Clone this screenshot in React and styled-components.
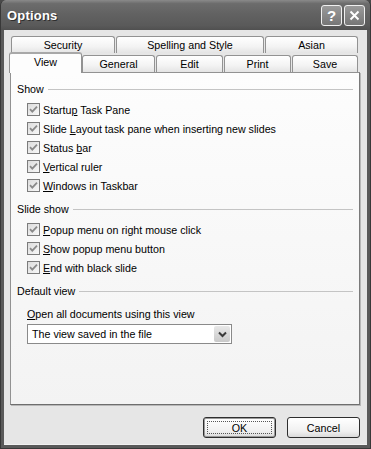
import React from 'react';
import styled, { createGlobalStyle } from 'styled-components';

const GlobalStyle = createGlobalStyle`
  html, body {
    margin: 0;
    padding: 0;
    background: #4a4a4a;
  }
  body {
    font-family: "Liberation Sans", Arial, sans-serif;
    font-size: 10.7px;
    color: #000;
  }
`;

const Window = styled.div`
  width: 371px;
  height: 449px;
  box-sizing: border-box;
  display: flex;
  flex-direction: column;
  background: #5a5a5a;
  border: 1px solid #383838;
  border-top: none;
  border-radius: 6px 6px 0 0;
  overflow: hidden;
`;

const TitleBar = styled.div`
  height: 30px;
  flex: none;
  display: flex;
  align-items: center;
  padding: 0 5px 0 6px;
  background: linear-gradient(#8a8a8a 0%, #6c6c6c 12%, #616161 50%, #5a5a5a 85%, #505050 100%);
`;

const Title = styled.div`
  flex: 1;
  color: #fff;
  font-weight: bold;
  font-size: 13px;
  letter-spacing: 0.2px;
  text-shadow: 1px 1px 0 #2e2e2e;
`;

const CaptionButton = styled.div`
  width: 19px;
  height: 19px;
  margin-left: 2px;
  display: flex;
  align-items: center;
  justify-content: center;
  border: 1px solid #f0f0f0;
  border-radius: 3px;
  background: linear-gradient(#9a9a9a, #767676);
  color: #fff;
  font-weight: bold;
  font-size: 15px;
`;

const Client = styled.div`
  flex: 1;
  margin: 0 3px 3px 3px;
  background: #e6e6e6;
  border-bottom: 1px solid #f2f2f2;
  display: flex;
  flex-direction: column;
  padding: 6px 7px 0 6px;
`;

const TabRow = styled.div`
  display: flex;
  gap: ${p => p.$gap}px;
  padding-left: ${p => p.$indent}px;
  height: ${p => p.$h}px;
`;

const Tab = styled.div`
  position: relative;
  box-sizing: border-box;
  width: ${p => p.$w}px;
  height: 17px;
  margin-top: ${p => p.$top}px;
  border: 1px solid #929292;
  border-bottom: none;
  border-radius: 3px 3px 0 0;
  background: linear-gradient(#ffffff, #f3f3f3 60%, #e4e4e4);
  display: flex;
  align-items: center;
  justify-content: center;
  line-height: 1;
  padding-top: 1px;
`;

const ActiveTab = styled(Tab)`
  height: 21px;
  z-index: 2;
  margin-left: -1px;
  margin-right: -1px;
  background: #fdfdfd;
  border-top: 2px solid #a8a8a8;
  align-items: flex-start;
  padding-top: 3px;
`;

const Panel = styled.div`
  width: 350px;
  height: 333px;
  box-sizing: border-box;
  border: 1px solid #929292;
  border-right-color: #7a7a7a;
  border-bottom-color: #6e6e6e;
  box-shadow: 1px 1px 0 #b8b8b8;
  background: linear-gradient(#fdfdfd, #f3f3f3);
  padding: 8px 6px 0 6px;
  display: flex;
  flex-direction: column;
`;

const GroupHeader = styled.div`
  display: flex;
  align-items: center;
  height: 16px;
  margin-top: ${p => p.$top || 0}px;
  margin-bottom: 3px;
  &::after {
    content: '';
    flex: 1;
    height: 1px;
    margin-left: 4px;
    background: #c4c4c4;
  }
`;

const Row = styled.div`
  display: flex;
  align-items: center;
  height: 19px;
  padding-left: 10px;
`;

const Box = styled.span`
  width: 13px;
  height: 13px;
  box-sizing: border-box;
  border: 1px solid #7c7c7c;
  background: linear-gradient(135deg, #dcdcdc, #f8f8f8);
  margin-right: 3px;
  display: flex;
  align-items: center;
  justify-content: center;
`;

const Label = styled.div`
  padding-left: 10px;
  height: 16px;
  display: flex;
  align-items: center;
  margin-top: 4px;
  margin-bottom: 2px;
`;

const Select = styled.div`
  margin-left: 10px;
  width: 205px;
  height: 20px;
  box-sizing: border-box;
  border: 1px solid #8a8a8a;
  background: #fff;
  display: flex;
  align-items: center;
  padding: 0 1px 0 4px;
`;

const SelectText = styled.span`
  flex: 1;
`;

const DropButton = styled.span`
  width: 16px;
  height: 16px;
  border-radius: 2px;
  background: linear-gradient(#e8e8e8, #c9c9c9);
  display: flex;
  align-items: center;
  justify-content: center;
`;

const ButtonBar = styled.div`
  display: flex;
  justify-content: flex-end;
  gap: 11px;
  padding-top: 12px;
`;

const Button = styled.div`
  width: 73px;
  height: 21px;
  box-sizing: border-box;
  border: 1px solid #2e2e2e;
  border-radius: 3px;
  background: linear-gradient(#ffffff, #f0f0f0 70%, #dadada);
  display: flex;
  align-items: center;
  justify-content: center;
  position: relative;
  box-shadow: ${p => (p.$default ? 'inset 0 0 0 1px #9a9a9a' : 'none')};
  &::after {
    content: '';
    display: ${p => (p.$default ? 'block' : 'none')};
    position: absolute;
    inset: 3px;
    border: 1px dotted #555;
  }
`;

const U = styled.span`
  text-decoration: underline;
`;

const Check = () => (
  <Box>
    <svg width="9" height="9" viewBox="0 0 9 9">
      <path d="M1 4.2 L3.3 6.6 L8 1.6" fill="none" stroke="#8a8a8a" strokeWidth="1.8" />
    </svg>
  </Box>
);

const CheckRow = ({ children }) => (
  <Row>
    <Check />
    <span>{children}</span>
  </Row>
);

export default function App() {
  return (
    <>
      <GlobalStyle />
      <Window>
        <TitleBar>
          <Title>Options</Title>
          <CaptionButton>?</CaptionButton>
          <CaptionButton>
            <svg width="11" height="11" viewBox="0 0 11 11">
              <path d="M1.5 1.5 L9.5 9.5 M9.5 1.5 L1.5 9.5" stroke="#fff" strokeWidth="2" />
            </svg>
          </CaptionButton>
        </TitleBar>
        <Client>
          <TabRow $gap={1} $indent={1} $h={17}>
            <Tab $w={104} $top={0}>Security</Tab>
            <Tab $w={148} $top={0}>Spelling and Style</Tab>
            <Tab $w={93} $top={0}>Asian</Tab>
          </TabRow>
          <TabRow $gap={1} $indent={0} $h={19}>
            <ActiveTab $w={73} $top={-1}>View</ActiveTab>
            <Tab $w={73} $top={2}>General</Tab>
            <Tab $w={67} $top={2}>Edit</Tab>
            <Tab $w={67} $top={2}>Print</Tab>
            <Tab $w={66} $top={2}>Save</Tab>
          </TabRow>
          <Panel>
            <GroupHeader>Show</GroupHeader>
            <CheckRow>Startu<U>p</U> Task Pane</CheckRow>
            <CheckRow>Slide <U>L</U>ayout task pane when inserting new slides</CheckRow>
            <CheckRow>Status <U>b</U>ar</CheckRow>
            <CheckRow><U>V</U>ertical ruler</CheckRow>
            <CheckRow><U>W</U>indows in Taskbar</CheckRow>
            <GroupHeader $top={6}>Slide show</GroupHeader>
            <CheckRow><U>P</U>opup menu on right mouse click</CheckRow>
            <CheckRow><U>S</U>how popup menu button</CheckRow>
            <CheckRow><U>E</U>nd with black slide</CheckRow>
            <GroupHeader $top={6}>Default view</GroupHeader>
            <Label><span><U>O</U>pen all documents using this view</span></Label>
            <Select>
              <SelectText>The view saved in the file</SelectText>
              <DropButton>
                <svg width="9" height="7" viewBox="0 0 9 7">
                  <path d="M1 1.5 L4.5 5 L8 1.5" fill="none" stroke="#3a3a3a" strokeWidth="2" />
                </svg>
              </DropButton>
            </Select>
          </Panel>
          <ButtonBar>
            <Button $default>OK</Button>
            <Button>Cancel</Button>
          </ButtonBar>
        </Client>
      </Window>
    </>
  );
}
